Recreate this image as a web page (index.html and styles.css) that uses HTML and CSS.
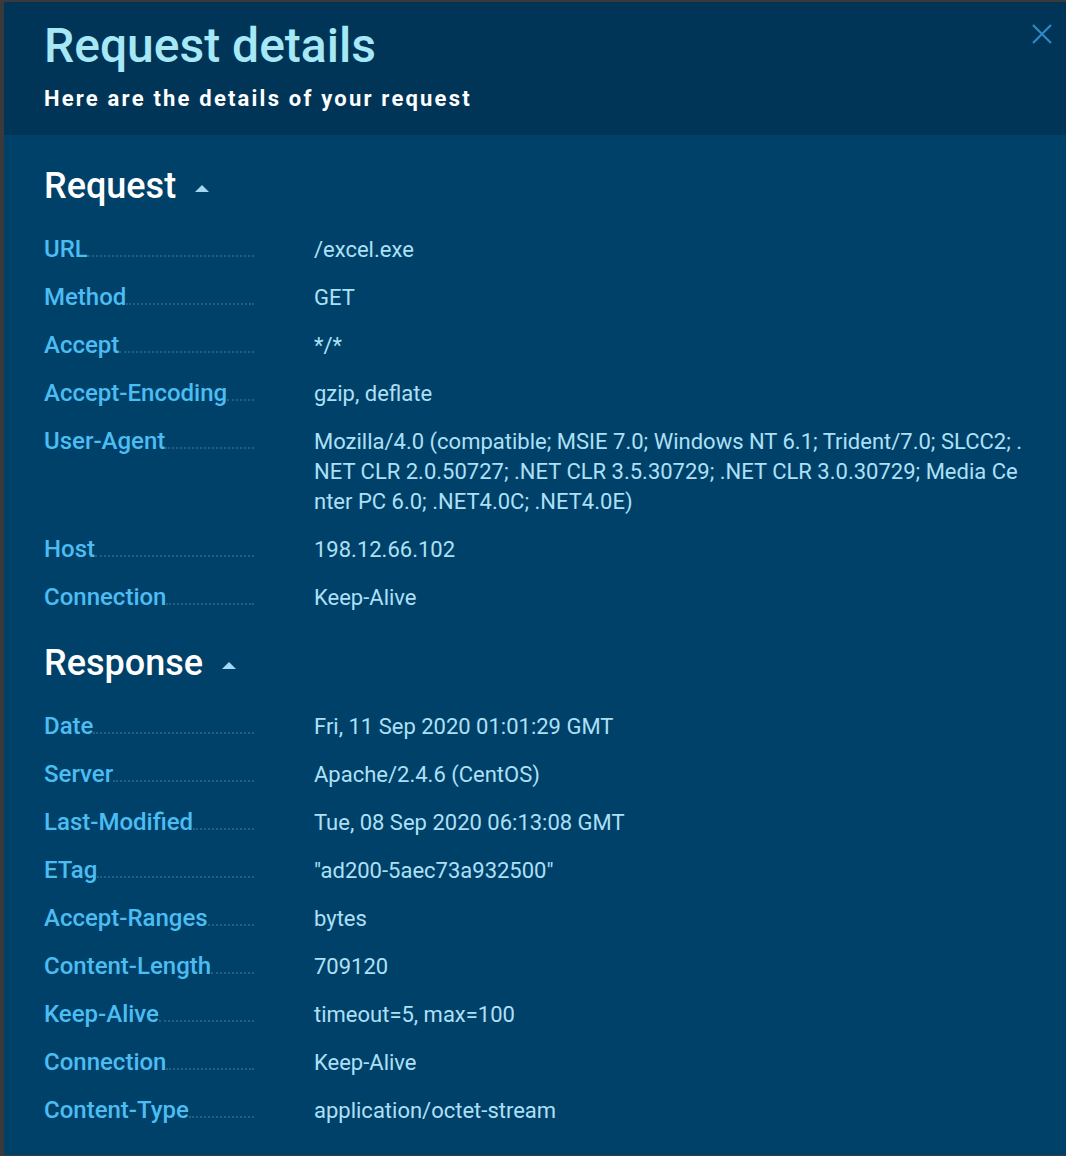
FILE: index.html
```html
<!DOCTYPE html>
<html lang="en">
<head>
    <meta charset="UTF-8">
    <meta name="viewport" content="width=device-width, initial-scale=1.0">
    <title>Request details</title>
    <link rel="stylesheet" href="styles.css">
</head>
<body>
    <div class="modal">
        <div class="modal-header">
            <h1>Request details</h1>
            <p>Here are the details of your request</p>
            <button class="btn-close" aria-label="Close">
                <svg width="22" height="22" viewBox="0 0 22 22"><path d="M2 2 L20 20 M20 2 L2 20" stroke="currentColor" stroke-width="2.2" fill="none"/></svg>
            </button>
        </div>

        <div class="modal-body">
            <div class="section">
                <h2>Request <span class="caret"></span></h2>
                <div class="row"><div class="key">URL</div><div class="val">/excel.exe</div></div>
                <div class="row"><div class="key">Method</div><div class="val">GET</div></div>
                <div class="row"><div class="key">Accept</div><div class="val">*/*</div></div>
                <div class="row"><div class="key">Accept-Encoding</div><div class="val">gzip, deflate</div></div>
                <div class="row"><div class="key">User-Agent</div><div class="val">Mozilla/4.0 (compatible; MSIE 7.0; Windows NT 6.1; Trident/7.0; SLCC2; .NET CLR 2.0.50727; .NET CLR 3.5.30729; .NET CLR 3.0.30729; Media Center PC 6.0; .NET4.0C; .NET4.0E)</div></div>
                <div class="row"><div class="key">Host</div><div class="val">198.12.66.102</div></div>
                <div class="row"><div class="key">Connection</div><div class="val">Keep-Alive</div></div>
            </div>

            <div class="section">
                <h2>Response <span class="caret"></span></h2>
                <div class="row"><div class="key">Date</div><div class="val">Fri, 11 Sep 2020 01:01:29 GMT</div></div>
                <div class="row"><div class="key">Server</div><div class="val">Apache/2.4.6 (CentOS)</div></div>
                <div class="row"><div class="key">Last-Modified</div><div class="val">Tue, 08 Sep 2020 06:13:08 GMT</div></div>
                <div class="row"><div class="key">ETag</div><div class="val">"ad200-5aec73a932500"</div></div>
                <div class="row"><div class="key">Accept-Ranges</div><div class="val">bytes</div></div>
                <div class="row"><div class="key">Content-Length</div><div class="val">709120</div></div>
                <div class="row"><div class="key">Keep-Alive</div><div class="val">timeout=5, max=100</div></div>
                <div class="row"><div class="key">Connection</div><div class="val">Keep-Alive</div></div>
                <div class="row"><div class="key">Content-Type</div><div class="val">application/octet-stream</div></div>
            </div>
        </div>
    </div>
</body>
</html>
```

FILE: styles.css
```css
body {
    font-family: Roboto, "Noto Sans", Arial, sans-serif;
    margin: 0;
    background-color: #3a3a3a;
}
.modal {
    margin: 2px 0 0 4px;
    background-color: #004169;
}
.modal-header {
    position: relative;
    background-color: #003558;
    padding: 16px 40px 22px;
}
.modal-header h1 {
    margin: 0;
    font-size: 48px;
    line-height: 56px;
    font-weight: 500;
    color: #a6e8f6;
}
.modal-header p {
    margin: 11px 0 0;
    font-size: 22px;
    line-height: 28px;
    font-weight: 700;
    letter-spacing: 2.2px;
    color: #ffffff;
}
.btn-close {
    position: absolute;
    top: 21px;
    right: 13px;
    padding: 0;
    border: none;
    background: none;
    color: #2e8ac2;
    cursor: pointer;
}
.btn-close svg {
    display: block;
}
.modal-body {
    padding: 31px 40px 20px 40px;
}
.section + .section {
    margin-top: 21px;
}
.section h2 {
    margin: 0 0 20px;
    font-size: 36px;
    line-height: 40px;
    font-weight: 500;
    color: #ffffff;
    display: flex;
    align-items: center;
}
.caret {
    width: 0;
    height: 0;
    margin: 4px 0 0 19px;
    border-left: 7px solid transparent;
    border-right: 7px solid transparent;
    border-bottom: 7px solid #a3d8f5;
}
.row {
    display: flex;
    align-items: baseline;
    padding: 9px 0;
}
.key {
    width: 210px;
    flex-shrink: 0;
    display: flex;
    align-items: baseline;
    font-size: 24px;
    line-height: 28px;
    font-weight: 500;
    color: #4cbdf2;
}
.key::after {
    content: "";
    flex: 1;
    border-bottom: 2px dotted #225f88;
}
.val {
    flex: 1;
    margin-left: 60px;
    font-size: 22px;
    line-height: 30px;
    color: #ade0f7;
    word-break: break-all;
}
```
